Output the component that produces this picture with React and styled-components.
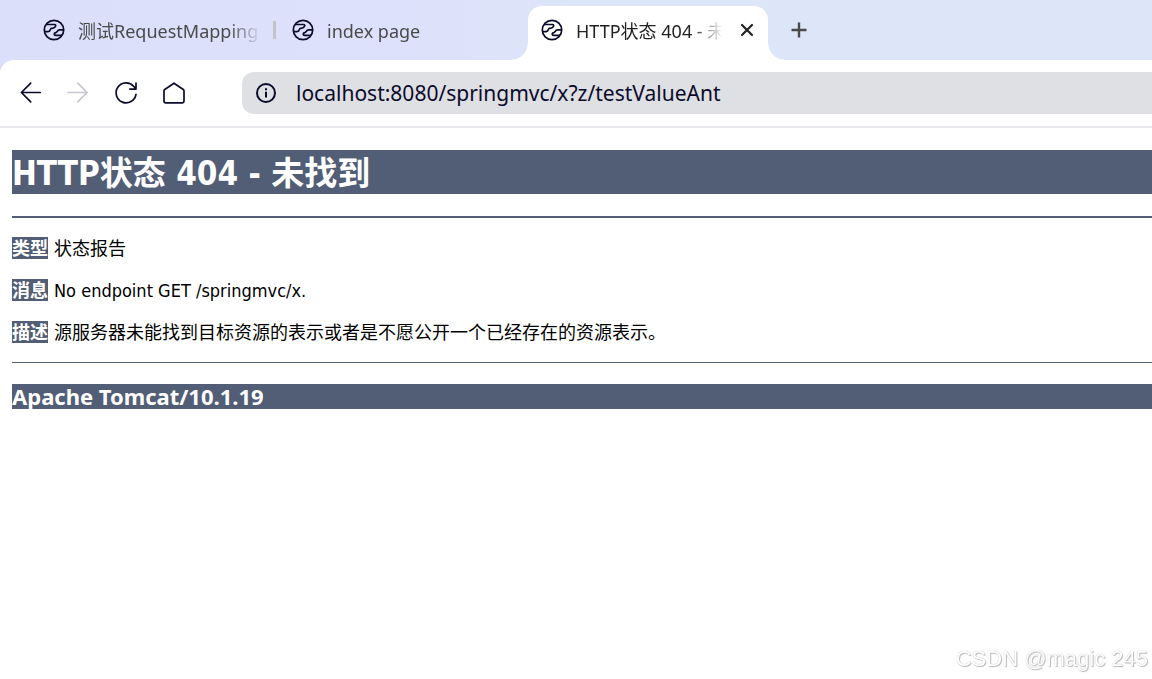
import React from "react";
import styled, { createGlobalStyle } from "styled-components";

const slate = "#525d76";
const ink = "#0b0b2b";

const GlobalStyle = createGlobalStyle`
  *, *::before, *::after { box-sizing: border-box; }
  html, body { margin: 0; background: #fff; }
  body, button, input { font-family: "Noto Sans", "Noto Sans CJK SC", sans-serif; }
  button { border: 0; padding: 0; background: none; color: inherit; font-size: inherit; }
`;

const Window = styled.div`
  display: flex;
  flex-direction: column;
  min-height: 100vh;
  overflow: hidden;
`;

const TabStrip = styled.div`
  display: flex;
  align-items: flex-end;
  height: 60px;
  padding-left: 30px;
  background: linear-gradient(90deg, #dcdffa, #dde1fb 35%, #dde5f8 50%, #dde6f9);
`;

const Tab = styled.div`
  position: relative;
  display: flex;
  align-items: center;
  flex: 0 0 auto;
  width: ${(p) => (p.$active ? 240 : 249)}px;
  height: 54px;
  padding: 0 12px 6px 13px;
  color: ${(p) => (p.$active ? "#222" : "#4a4a4a")};
  background: ${(p) => (p.$active ? "#fff" : "transparent")};
  border-radius: 14px 14px 0 0;

  &::before,
  &::after {
    content: "";
    display: ${(p) => (p.$active ? "block" : "none")};
    position: absolute;
    bottom: 0;
    width: 16px;
    height: 16px;
  }
  &::before {
    right: 100%;
    background: radial-gradient(circle at 0 0, transparent 15px, #fff 16px);
  }
  &::after {
    left: 100%;
    background: radial-gradient(circle at 100% 0, transparent 15px, #fff 16px);
  }
`;

const TabButton = styled.button`
  display: flex;
  align-items: center;
  gap: 13px;
  flex: 1;
  min-width: 0;
  font-size: 18px;
  line-height: 26px;
  svg { flex: none; }
`;

const TabTitle = styled.span`
  flex: 1;
  min-width: 0;
  padding-top: 2px;
  overflow: hidden;
  white-space: nowrap;
  text-align: left;
  mask-image: linear-gradient(90deg, #000 calc(100% - 32px), transparent);
`;

const Divider = styled.span`
  flex: none;
  width: 3px;
  height: 18px;
  margin-left: 12px;
  margin-right: -9px;
  background: #c4c4c8;
`;

const CloseButton = styled.button`
  display: flex;
  margin: 0 1px 0 16px;
`;

const NewTab = styled.button`
  display: flex;
  align-self: center;
  margin-left: 23px;
`;

const Toolbar = styled.div`
  display: flex;
  align-items: center;
  height: 68px;
  padding-left: 18px;
  background: #fff;
  border-bottom: 2px solid #e8e8ec;
  border-radius: 14px 0 0 0;
`;

const ToolbarBack = styled.div`
  background: #dcdffa;
`;

const NavButtons = styled.div`
  display: flex;
  gap: 22px;
  margin-right: 54px;
`;

const IconButton = styled.button`
  display: flex;
  color: ${ink};
  &:disabled { color: #c6c6ce; }
`;

const AddressBar = styled.label`
  display: flex;
  align-items: center;
  gap: 18px;
  flex: 1;
  height: 42px;
  padding-left: 12px;
  background: #dfe0e4;
  border-radius: 12px 0 0 12px;
  svg { flex: none; }
`;

const AddressInput = styled.input`
  flex: 1;
  min-width: 0;
  padding: 0;
  border: 0;
  outline: 0;
  background: transparent;
  color: ${ink};
  font-size: 21px;
  line-height: 30px;
`;

const Page = styled.main`
  padding: 22px 0 0 12px;
  color: #000;
  font-family: "DejaVu Sans Condensed", "Noto Sans CJK SC", sans-serif;
`;

const Title = styled.h1`
  margin: 0 0 22px;
  padding-top: 4px;
  background: ${slate};
  color: #fff;
  font-size: 33px;
  line-height: 40px;
`;

const Rule = styled.hr`
  height: ${(p) => p.$weight}px;
  margin: 0;
  border: 0;
  background: ${slate};
`;

const Report = styled.div`
  display: flex;
  flex-direction: column;
  gap: 20px;
  padding: 19px 0;
`;

const Line = styled.p`
  display: flex;
  gap: 6px;
  margin: 0;
  font-size: 18px;
  line-height: 20px;
`;

const Text = styled.span`
  padding-top: 2px;
`;

const Label = styled.b`
  flex: none;
  padding-top: 2px;
  background: ${slate};
  color: #fff;
`;

const Server = styled.h3`
  margin: 21px 0 0;
  background: ${slate};
  color: #fff;
  font-family: "Noto Sans", sans-serif;
  font-size: 22px;
  line-height: 25px;
`;

const Watermark = styled.div`
  position: fixed;
  right: 4px;
  bottom: 6px;
  color: #fff;
  font-family: "Liberation Sans", sans-serif;
  font-size: 22px;
  line-height: 28px;
  text-shadow: 0 0 1px #aaa, 1px 1px 1px #bbb;
`;

const Globe = () => (
  <svg width="22" height="22" viewBox="0 0 22 22" fill="none" stroke={ink} strokeWidth="1.7" strokeLinejoin="round" aria-hidden="true">
    <circle cx="11" cy="11" r="9.7" />
    <path d="M3.2 5.5H11.4Q13.4 5.7 12.4 7.4Q11.7 8.9 9.8 9.2Q7.6 9.3 7.3 10.6Q6.9 12.5 5 12.6H1.5" />
    <path d="M20.5 10.9H16.6Q15 11 14.5 12.2Q14 13.2 12.8 13.6Q11.2 14 11.2 15.1Q11.3 16.3 12.8 16.4H19" />
  </svg>
);

const Stroke = ({ size = 26, width = 1.7, children }) => (
  <svg width={size} height={size} viewBox={`0 0 ${size} ${size}`} fill="none" stroke="currentColor" strokeWidth={width} strokeLinecap="round" strokeLinejoin="round" aria-hidden="true">
    {children}
  </svg>
);

export default function App() {
  return (
    <>
      <GlobalStyle />
      <Window>
        <TabStrip>
          <Tab>
            <TabButton type="button"><Globe /><TabTitle>测试RequestMapping</TabTitle></TabButton>
            <Divider />
          </Tab>
          <Tab>
            <TabButton type="button"><Globe /><TabTitle>index page</TabTitle></TabButton>
          </Tab>
          <Tab $active>
            <TabButton type="button"><Globe /><TabTitle>HTTP状态 404 - 未找到</TabTitle></TabButton>
            <CloseButton type="button" aria-label="Close tab">
              <Stroke size={16} width={2.2}><path d="M3 3L13 13M13 3L3 13" /></Stroke>
            </CloseButton>
          </Tab>
          <NewTab type="button" aria-label="New tab">
            <svg width="16" height="16" viewBox="0 0 16 16" stroke="#4a4a4a" strokeWidth="2.4" aria-hidden="true"><path d="M8 .5V15.5M.5 8H15.5" /></svg>
          </NewTab>
        </TabStrip>

        <ToolbarBack>
          <Toolbar>
            <NavButtons>
              <IconButton type="button" aria-label="Back">
                <Stroke><path d="M22.3 12.5H3.8M12.7 3.2L3.4 12.5L12.7 21.8" /></Stroke>
              </IconButton>
              <IconButton type="button" aria-label="Forward" disabled>
                <Stroke><path d="M2.2 12.5H20.7M11.8 3.2L21.1 12.5L11.8 21.8" /></Stroke>
              </IconButton>
              <IconButton type="button" aria-label="Reload">
                <Stroke><path d="M22 14.4A10 10 0 1 1 19.6 6.2L22 8.8M22 3V9.1H15.8" /></Stroke>
              </IconButton>
              <IconButton type="button" aria-label="Home">
                <Stroke><path d="M12 3.2L21.3 9.5Q22 10 22 10.8V21.2Q22 22.8 20.4 22.8H3.6Q2 22.8 2 21.2V10.8Q2 10 2.7 9.5Z" /></Stroke>
              </IconButton>
            </NavButtons>
            <AddressBar>
              <svg width="24" height="24" viewBox="0 0 24 24" fill="none" stroke={ink} strokeWidth="2" aria-hidden="true">
                <circle cx="12" cy="12" r="9" />
                <path d="M12 10.8V16.6M12 7.2V9.2" />
              </svg>
              <AddressInput type="text" aria-label="Address" defaultValue="localhost:8080/springmvc/x?z/testValueAnt" />
            </AddressBar>
          </Toolbar>
        </ToolbarBack>

        <Page>
          <Title>HTTP状态 404 - 未找到</Title>
          <Rule $weight={2} />
          <Report>
            <Line><Label>类型</Label><Text>状态报告</Text></Line>
            <Line><Label>消息</Label><Text>No endpoint GET /springmvc/x.</Text></Line>
            <Line><Label>描述</Label><Text>源服务器未能找到目标资源的表示或者是不愿公开一个已经存在的资源表示。</Text></Line>
          </Report>
          <Rule $weight={1} />
          <Server>Apache Tomcat/10.1.19</Server>
        </Page>
        <Watermark>CSDN @magic 245</Watermark>
      </Window>
    </>
  );
}
